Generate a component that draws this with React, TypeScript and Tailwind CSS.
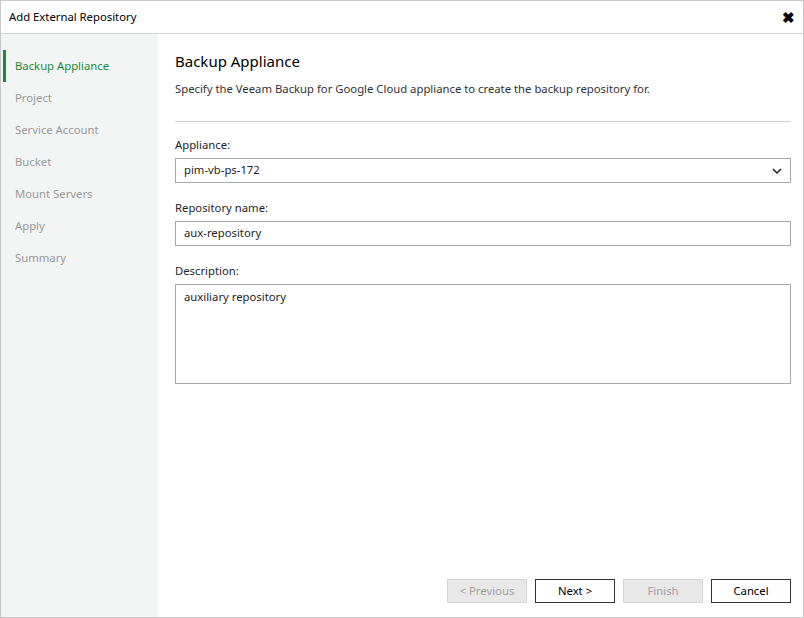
import React from "react";

export default function App() {
  return (
    <div className="w-[804px] h-[618px] bg-white border border-[#c8c8c8] flex flex-col text-[11.3px] text-[#1f1f1f]" style={{ fontFamily: '"Noto Sans", "Open Sans", sans-serif' }}>
      <div className="h-[33px] shrink-0 border-b border-[#d4d4d4] flex items-center justify-between pl-[8px] pr-[8px]">
        <span className="text-black">Add External Repository</span>
        <span className="text-[15px] font-bold text-black leading-none">✖</span>
      </div>
      <div className="flex flex-1 min-h-0">
        <div className="w-[157px] shrink-0 bg-[#f3f4f4] pt-[16px] flex flex-col">
          {["Backup Appliance", "Project", "Service Account", "Bucket", "Mount Servers", "Apply", "Summary"].map((s, i) => (
            <div key={s} className={"h-[32px] flex items-center pl-[9px] border-l-[3px] ml-[2px] " + (i === 0 ? "border-[#1a8a3c] text-[#1a8a3c]" : "border-transparent text-[#9a9a9a]")}>
              {s}
            </div>
          ))}
        </div>
        <div className="flex-1 flex flex-col pl-[17px] pr-[12px]">
          <div className="text-[15px] mt-[16px] text-black">Backup Appliance</div>
          <div className="mt-[8px] text-[#333]">Specify the Veeam Backup for Google Cloud appliance to create the backup repository for.</div>
          <div className="mt-[24px] border-t border-[#d0d0d0]" />
          <div className="mt-[15px]">Appliance:</div>
          <div className="mt-[4px] h-[25px] border border-[#a8a8a8] flex items-center justify-between px-[8px]">
            <span>pim-vb-ps-172</span>
            <svg width="10" height="6" viewBox="0 0 10 6"><path d="M1 1l4 4 4-4" stroke="#222" strokeWidth="1.5" fill="none" /></svg>
          </div>
          <div className="mt-[17px]">Repository name:</div>
          <div className="mt-[4px] h-[25px] border border-[#a8a8a8] flex items-center px-[8px]">aux-repository</div>
          <div className="mt-[17px]">Description:</div>
          <div className="mt-[4px] h-[100px] border border-[#a8a8a8] px-[8px] pt-[4px]">auxiliary repository</div>
          <div className="flex-1" />
          <div className="flex justify-end gap-[8px] mb-[14px]">
            <div className="w-[80px] h-[24px] border border-[#d6d6d6] bg-[#e8e8e8] text-[#a0a0a0] flex items-center justify-center">&lt; Previous</div>
            <div className="w-[80px] h-[24px] border border-[#333] flex items-center justify-center text-black">Next &gt;</div>
            <div className="w-[80px] h-[24px] border border-[#d6d6d6] bg-[#e8e8e8] text-[#a0a0a0] flex items-center justify-center">Finish</div>
            <div className="w-[80px] h-[24px] border border-[#333] flex items-center justify-center text-black">Cancel</div>
          </div>
        </div>
      </div>
    </div>
  );
}
